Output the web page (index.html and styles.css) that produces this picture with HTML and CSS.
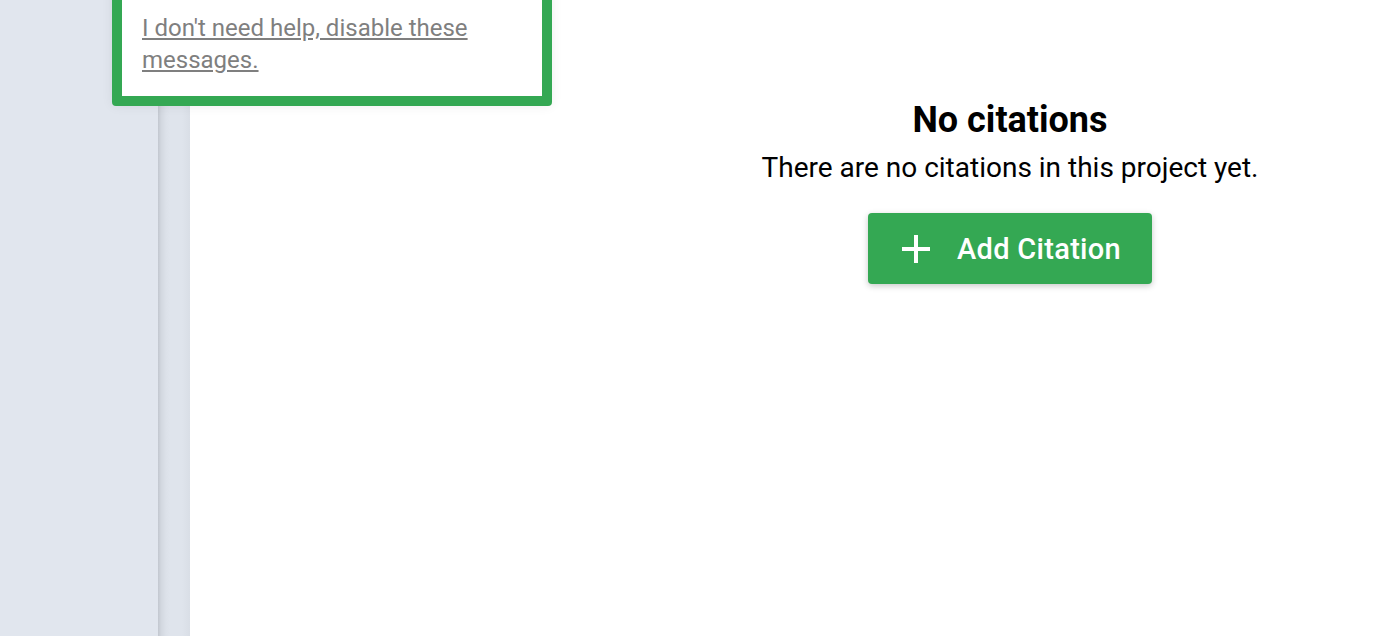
FILE: index.html
```html
<!DOCTYPE html>
<html lang="en">
<head>
<meta charset="utf-8">
<title>Citations</title>
<link rel="stylesheet" href="styles.css">
</head>
<body>
<div class="app">
  <aside class="sidebar"></aside>
  <div class="rail"></div>
  <main class="main">
    <div class="main-left"></div>
    <section class="empty">
      <h2 class="empty-title">No citations</h2>
      <p class="empty-text">There are no citations in this project yet.</p>
      <button class="add-btn" type="button">
        <svg class="add-icon" width="32" height="32" viewBox="0 0 32 32" aria-hidden="true">
          <path d="M16 2v28M2 16h28" stroke="#fff" stroke-width="4" fill="none"/>
        </svg>
        <span class="add-label">Add Citation</span>
      </button>
    </section>
  </main>
  <div class="tip">
    <a class="tip-link" href="#">I don't need help, disable these messages.</a>
  </div>
</div>
</body>
</html>
```
FILE: styles.css
```css
* { box-sizing: border-box; }
html, body { margin: 0; padding: 0; height: 100%; }
body {
  font-family: Roboto, "Noto Sans", "Liberation Sans", sans-serif;
  background: #fff;
  overflow: hidden;
}
.app {
  position: relative;
  display: flex;
  height: 636px;
  width: 1384px;
}
.sidebar {
  width: 158px;
  flex: none;
  background: #e1e6ee;
}
.rail {
  width: 32px;
  flex: none;
  background: linear-gradient(to right, #c2c7cf 0, #d2d7df 3px, #dce1e9 8px, #dfe4ec 12px, #dfe4ec 24px, #d9dee6 32px);
}
.main {
  flex: 1;
  display: flex;
  background: #fff;
}
.main-left {
  width: 446px;
  flex: none;
}
.empty {
  flex: 1;
  display: flex;
  flex-direction: column;
  align-items: center;
  padding-top: 98px;
}
.empty-title {
  margin: 0;
  font-size: 36px;
  font-weight: 700;
  line-height: 44px;
  color: #000;
}
.empty-text {
  margin: 8px 0 0;
  font-size: 28px;
  line-height: 36px;
  color: #000;
}
.add-btn {
  margin-top: 27px;
  width: 284px;
  height: 71px;
  display: flex;
  align-items: center;
  justify-content: flex-start;
  gap: 25px;
  padding: 0 0 0 32px;
  border: none;
  border-radius: 4px;
  background: #34a853;
  color: #fff;
  font-family: Roboto, "Noto Sans", sans-serif;
  font-size: 29px;
  font-weight: 500;
  letter-spacing: 0.3px;
  white-space: nowrap;
  box-shadow: 0 2px 6px rgba(0, 0, 0, 0.22);
  cursor: pointer;
}
.add-icon { flex: none; }
.add-label { flex: none; }
.tip {
  position: absolute;
  left: 112px;
  top: -40px;
  width: 440px;
  background: #fff;
  border: 10px solid #34a853;
  border-radius: 4px;
  padding: 42px 20px 20px;
  box-shadow: 0 0 12px rgba(0, 0, 0, 0.07);
}
.tip-link {
  font-size: 24px;
  line-height: 32px;
  color: #7f7f7f;
  text-decoration: underline;
}
```
